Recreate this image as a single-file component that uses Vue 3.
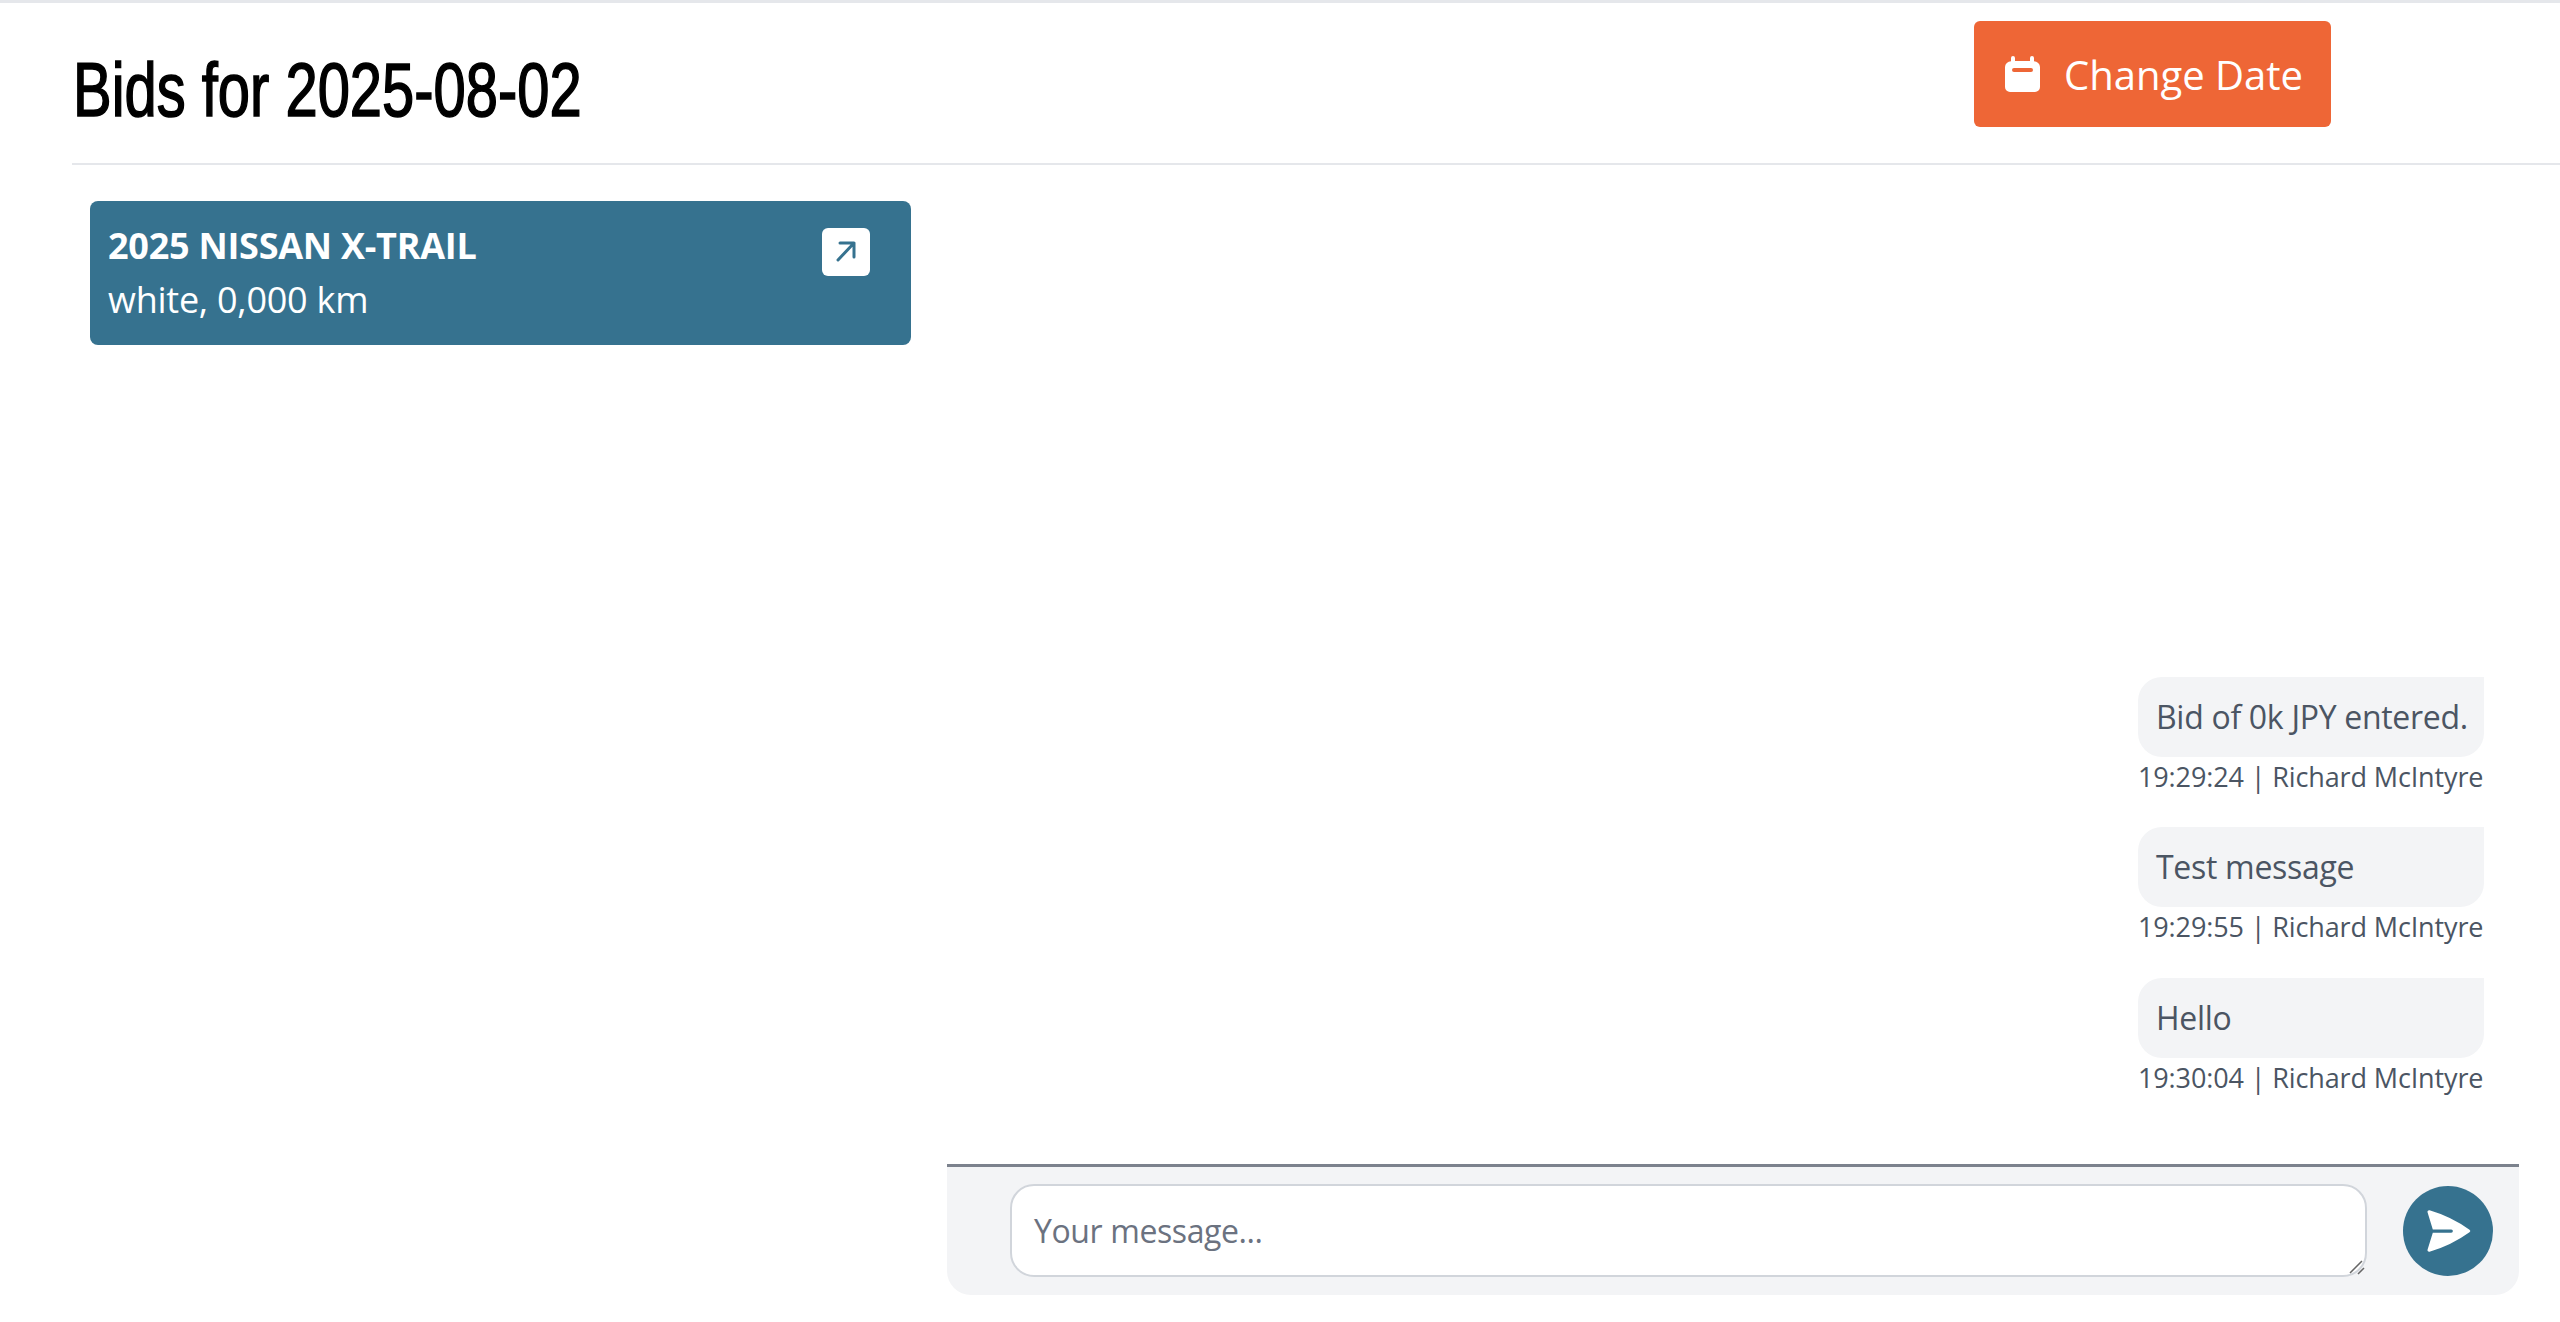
<template>
  <div class="page">
    <header class="header">
      <h1>Bids for {{ date }}</h1>
      <button class="date-btn">
        <svg class="cal-icon" viewBox="0 0 35 36" fill="#fff">
          <path fill-rule="evenodd" d="M8 0a2 2 0 0 1 2 2v3h15V2a2 2 0 0 1 4 0v3.2A6 6 0 0 1 35 11v20a5 5 0 0 1-5 5H5a5 5 0 0 1-5-5V11a6 6 0 0 1 6-5.800V2a2 2 0 0 1 2-2ZM9 12a2 2 0 0 0 0 4h17a2 2 0 0 0 0-4H9Z" />
        </svg>
        <span>Change Date</span>
      </button>
    </header>

    <main class="content">
      <section class="cars">
        <div class="car-card">
          <div>
            <div class="car-name">2025 NISSAN X-TRAIL</div>
            <div class="car-info">white, 0,000 km</div>
          </div>
          <a class="car-link">
            <svg viewBox="0 0 48 48" fill="none" stroke="#36728f" stroke-width="3" stroke-linecap="round" stroke-linejoin="round">
              <path d="M18 15h14v14M32 15 16 32" />
            </svg>
          </a>
        </div>
      </section>

      <section class="chat">
        <div class="messages">
          <div v-for="m in messages" :key="m.time" class="message">
            <div class="bubble">{{ m.text }}</div>
            <div class="meta">{{ m.time }} | {{ m.user }}</div>
          </div>
        </div>
        <div class="composer">
          <div class="input-wrap">
            <textarea placeholder="Your message..."></textarea>
            <svg class="grip" viewBox="0 0 16 16" stroke="#666" stroke-width="1.500" fill="none">
              <path d="M1 14 13 2M9 15l6-6" />
            </svg>
          </div>
          <button class="send-btn">
            <svg viewBox="0 0 24 24" fill="#fff">
              <path d="M3.478 2.404a.75.75 0 0 0-.926.941l2.432 7.905H13.500a.75.75 0 0 1 0 1.500H4.984l-2.432 7.905a.75.75 0 0 0 .926.940 60.519 60.519 0 0 0 18.445-8.986.75.75 0 0 0 0-1.218A60.517 60.517 0 0 0 3.478 2.404Z" />
            </svg>
          </button>
        </div>
      </section>
    </main>
  </div>
</template>

<script setup>
const date = '2025-08-02'

const messages = [
  { text: 'Bid of 0k JPY entered.', time: '19:29:24', user: 'Richard McIntyre' },
  { text: 'Test message', time: '19:29:55', user: 'Richard McIntyre' },
  { text: 'Hello', time: '19:30:04', user: 'Richard McIntyre' }
]
</script>

<style>
html, body {
  background: #fff;
}
</style>

<style scoped>
.page {
  min-height: 1322px;
  box-sizing: border-box;
  border-top: 3px solid #e5e7eb;
  font-family: 'Open Sans', sans-serif;
  overflow: hidden;
}

.header {
  display: flex;
  justify-content: space-between;
  align-items: flex-start;
  height: 162px;
  box-sizing: border-box;
  margin-left: 72px;
  padding: 18px 229px 0 0;
  border-bottom: 2px solid #e5e7eb;
}

/* no Oswald here, so squeeze the closest sans */
h1 {
  margin: 25px 0 0 1px;
  font-family: 'Liberation Sans', sans-serif;
  font-size: 76px;
  line-height: 88px;
  font-weight: 400;
  color: #000;
  white-space: nowrap;
  transform: scaleX(0.762);
  transform-origin: left center;
  -webkit-text-stroke: 1.600px #000;
}

.date-btn {
  display: flex;
  align-items: center;
  gap: 24px;
  width: 357px;
  height: 106px;
  padding: 0 0 0 31px;
  border: none;
  border-radius: 6px;
  background: #ee6636;
  color: #fff;
  font-family: inherit;
  font-size: 40px;
  line-height: 60px;
}

.date-btn span {
  padding-top: 2px;
}

.cal-icon {
  width: 35px;
  height: 36px;
}

.content {
  display: flex;
  gap: 36px;
  padding: 0 41px 0 90px;
}

.cars {
  flex: 0 0 821px;
  padding-top: 36px;
}

.car-card {
  display: flex;
  justify-content: space-between;
  align-items: flex-start;
  padding: 18px 41px 18px 18px;
  border-radius: 8px;
  background: #36728f;
  color: #fff;
  font-size: 36px;
  line-height: 54px;
  letter-spacing: -0.25px;
}

.car-name {
  font-weight: 700;
}

.car-link {
  width: 48px;
  height: 48px;
  margin-top: 9px;
  border-radius: 6px;
  background: #fff;
}

.car-link svg {
  display: block;
}

.chat {
  flex: 1;
  height: 1130px;
  display: flex;
  flex-direction: column;
  justify-content: flex-end;
}

.messages {
  display: flex;
  flex-direction: column;
  align-items: flex-end;
  gap: 31px;
  padding: 0 35px 67px 0;
}

.message {
  width: 346px;
}

.bubble {
  padding: 16px 18px;
  border-radius: 24px 0 24px 24px;
  background: #f3f4f6;
  color: #4b5563;
  font-size: 32px;
  line-height: 48px;
  letter-spacing: -0.3px;
  white-space: nowrap;
}

.meta {
  color: #4b5563;
  font-size: 27px;
  line-height: 39.5px;
  letter-spacing: -0.13px;
  white-space: nowrap;
}

.composer {
  display: flex;
  align-items: flex-start;
  gap: 36px;
  height: 131px;
  box-sizing: border-box;
  padding: 17px 26px 18px 63px;
  border-top: 3px solid #7c828d;
  border-radius: 0 0 24px 24px;
  background: #f3f4f6;
}

.input-wrap {
  flex: 1;
  position: relative;
  height: 93px;
}

textarea {
  display: block;
  width: 100%;
  height: 100%;
  box-sizing: border-box;
  padding: 21px 22px 15px;
  border: 2px solid #d1d5db;
  border-radius: 24px;
  background: #fff;
  color: #374151;
  font-family: inherit;
  font-size: 32px;
  line-height: 48px;
  letter-spacing: -0.4px;
  outline: none;
  resize: none;
}

textarea::placeholder {
  color: #6b7280;
}

.grip {
  position: absolute;
  right: 2px;
  bottom: 2px;
  width: 16px;
  height: 16px;
  pointer-events: none;
}

.send-btn {
  width: 90px;
  height: 90px;
  flex-shrink: 0;
  margin-top: 2px;
  display: flex;
  align-items: center;
  justify-content: center;
  padding: 0;
  border: none;
  border-radius: 50%;
  background: #36728f;
}

.send-btn svg {
  width: 52px;
  height: 52px;
}
</style>
